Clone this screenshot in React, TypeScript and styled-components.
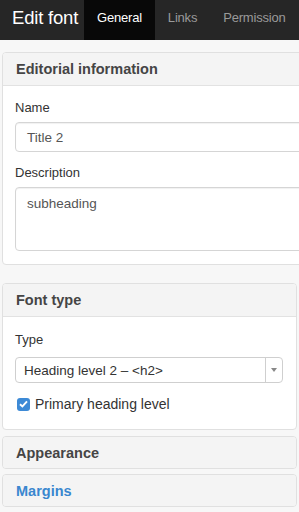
import React from "react";
import styled, { createGlobalStyle } from "styled-components";

const Global = createGlobalStyle`
  html, body { margin: 0; padding: 0; }
  body {
    background: #f7f7f7;
    font-family: "Liberation Sans", Arial, sans-serif;
    color: #333;
    overflow: hidden;
    width: 299px;
    height: 512px;
  }
`;

const Page = styled.div`
  width: 299px;
  height: 512px;
  overflow: hidden;
  display: flex;
  flex-direction: column;
`;

const TopBar = styled.div`
  height: 40px;
  background: #262626;
  display: flex;
  align-items: stretch;
  flex-shrink: 0;
`;

const Brand = styled.div`
  color: #fff;
  font-size: 18.5px;
  padding: 0 0 5px 12px;
  width: 84px;
  box-sizing: border-box;
  white-space: nowrap;
  display: flex;
  align-items: center;
  letter-spacing: -0.2px;
  flex-shrink: 0;
`;

const Tab = styled.div<{ $active?: boolean }>`
  display: flex;
  align-items: center;
  padding: 0 13px 5px;
  font-size: 13px;
  white-space: nowrap;
  letter-spacing: -0.2px;
  color: ${(p) => (p.$active ? "#fff" : "#9a9a9a")};
  background: ${(p) => (p.$active ? "#080808" : "transparent")};
`;

const Content = styled.div`
  padding: 12px 0 0 2px;
  display: flex;
  flex-direction: column;
`;

const Panel = styled.div<{ $wide?: boolean; $mb?: number }>`
  width: ${(p) => (p.$wide ? "330px" : "295px")};
  border: 1px solid #e0e0e0;
  border-radius: 4px;
  background: #fff;
  margin-bottom: ${(p) => p.$mb ?? 0}px;
  box-sizing: border-box;
  overflow: hidden;
  flex-shrink: 0;
`;

const PanelHeading = styled.div<{ $link?: boolean; $closed?: boolean }>`
  background: #f4f4f4;
  height: ${(p) => (p.$closed ? "31px" : "33px")};
  box-sizing: border-box;
  border-bottom: ${(p) => (p.$closed ? "none" : "1px solid #e2e2e2")};
  padding: 0 13px;
  display: flex;
  align-items: center;
  font-size: 14.5px;
  font-weight: bold;
  color: ${(p) => (p.$link ? "#3a87cf" : "#454545")};
`;

const PanelBody = styled.div<{ $pt: number; $pb: number }>`
  padding: ${(p) => p.$pt}px 13px ${(p) => p.$pb}px 12px;
  display: flex;
  flex-direction: column;
`;

const Label = styled.label<{ $mb: number; $mt?: number }>`
  font-size: 13px;
  line-height: 18px;
  color: #333;
  margin-bottom: ${(p) => p.$mb}px;
  margin-top: ${(p) => p.$mt ?? 0}px;
`;

const TextInput = styled.div`
  height: 30px;
  border: 1px solid #d5d5d5;
  border-radius: 4px;
  box-sizing: border-box;
  padding: 0 11px;
  display: flex;
  align-items: center;
  font-size: 13.5px;
  color: #555;
  box-shadow: inset 0 1px 1px rgba(0, 0, 0, 0.06);
`;

const TextArea = styled.div`
  height: 64px;
  border: 1px solid #d5d5d5;
  border-radius: 4px;
  box-sizing: border-box;
  padding: 8px 11px;
  font-size: 13.5px;
  color: #555;
  box-shadow: inset 0 1px 1px rgba(0, 0, 0, 0.06);
`;

const Select = styled.div`
  height: 26px;
  width: 268px;
  border: 1px solid #cfcfcf;
  border-radius: 4px;
  box-sizing: border-box;
  display: flex;
  align-items: stretch;
  font-size: 13.5px;
  color: #333;
`;

const SelectValue = styled.div`
  flex: 1;
  padding: 0 8px;
  display: flex;
  align-items: center;
`;

const SelectArrow = styled.div`
  width: 16px;
  border-left: 1px solid #cfcfcf;
  display: flex;
  align-items: center;
  justify-content: center;
`;

const CheckRow = styled.div`
  display: flex;
  align-items: center;
  margin-top: 13px;
  gap: 5px;
  font-size: 14px;
  color: #333;
  padding-left: 2px;
`;

const Box = styled.div`
  width: 13px;
  height: 13px;
  border-radius: 3px;
  background: #3d8ad6;
  display: flex;
  align-items: center;
  justify-content: center;
`;

export default function App() {
  return (
    <Page>
      <Global />
      <TopBar>
        <Brand>Edit font</Brand>
        <Tab $active>General</Tab>
        <Tab>Links</Tab>
        <Tab>Permission</Tab>
      </TopBar>
      <Content>
        <Panel $wide $mb={18}>
          <PanelHeading>Editorial information</PanelHeading>
          <PanelBody $pt={13} $pb={13}>
            <Label $mb={5}>Name</Label>
            <TextInput>Title 2</TextInput>
            <Label $mb={5} $mt={12}>Description</Label>
            <TextArea>subheading</TextArea>
          </PanelBody>
        </Panel>
        <Panel $mb={6}>
          <PanelHeading>Font type</PanelHeading>
          <PanelBody $pt={14} $pb={17}>
            <Label $mb={8}>Type</Label>
            <Select>
              <SelectValue>Heading level 2 – &lt;h2&gt;</SelectValue>
              <SelectArrow>
                <svg width="6" height="4" viewBox="0 0 6 4">
                  <path d="M0 0 L6 0 L3 4 Z" fill="#888" />
                </svg>
              </SelectArrow>
            </Select>
            <CheckRow>
              <Box>
                <svg width="9" height="8" viewBox="0 0 9 8">
                  <path d="M1 4.2 L3.4 6.4 L8 1.4" stroke="#fff" strokeWidth="1.9" fill="none" />
                </svg>
              </Box>
              Primary heading level
            </CheckRow>
          </PanelBody>
        </Panel>
        <Panel $mb={5}>
          <PanelHeading $closed>Appearance</PanelHeading>
        </Panel>
        <Panel>
          <PanelHeading $closed $link>Margins</PanelHeading>
        </Panel>
      </Content>
    </Page>
  );
}
